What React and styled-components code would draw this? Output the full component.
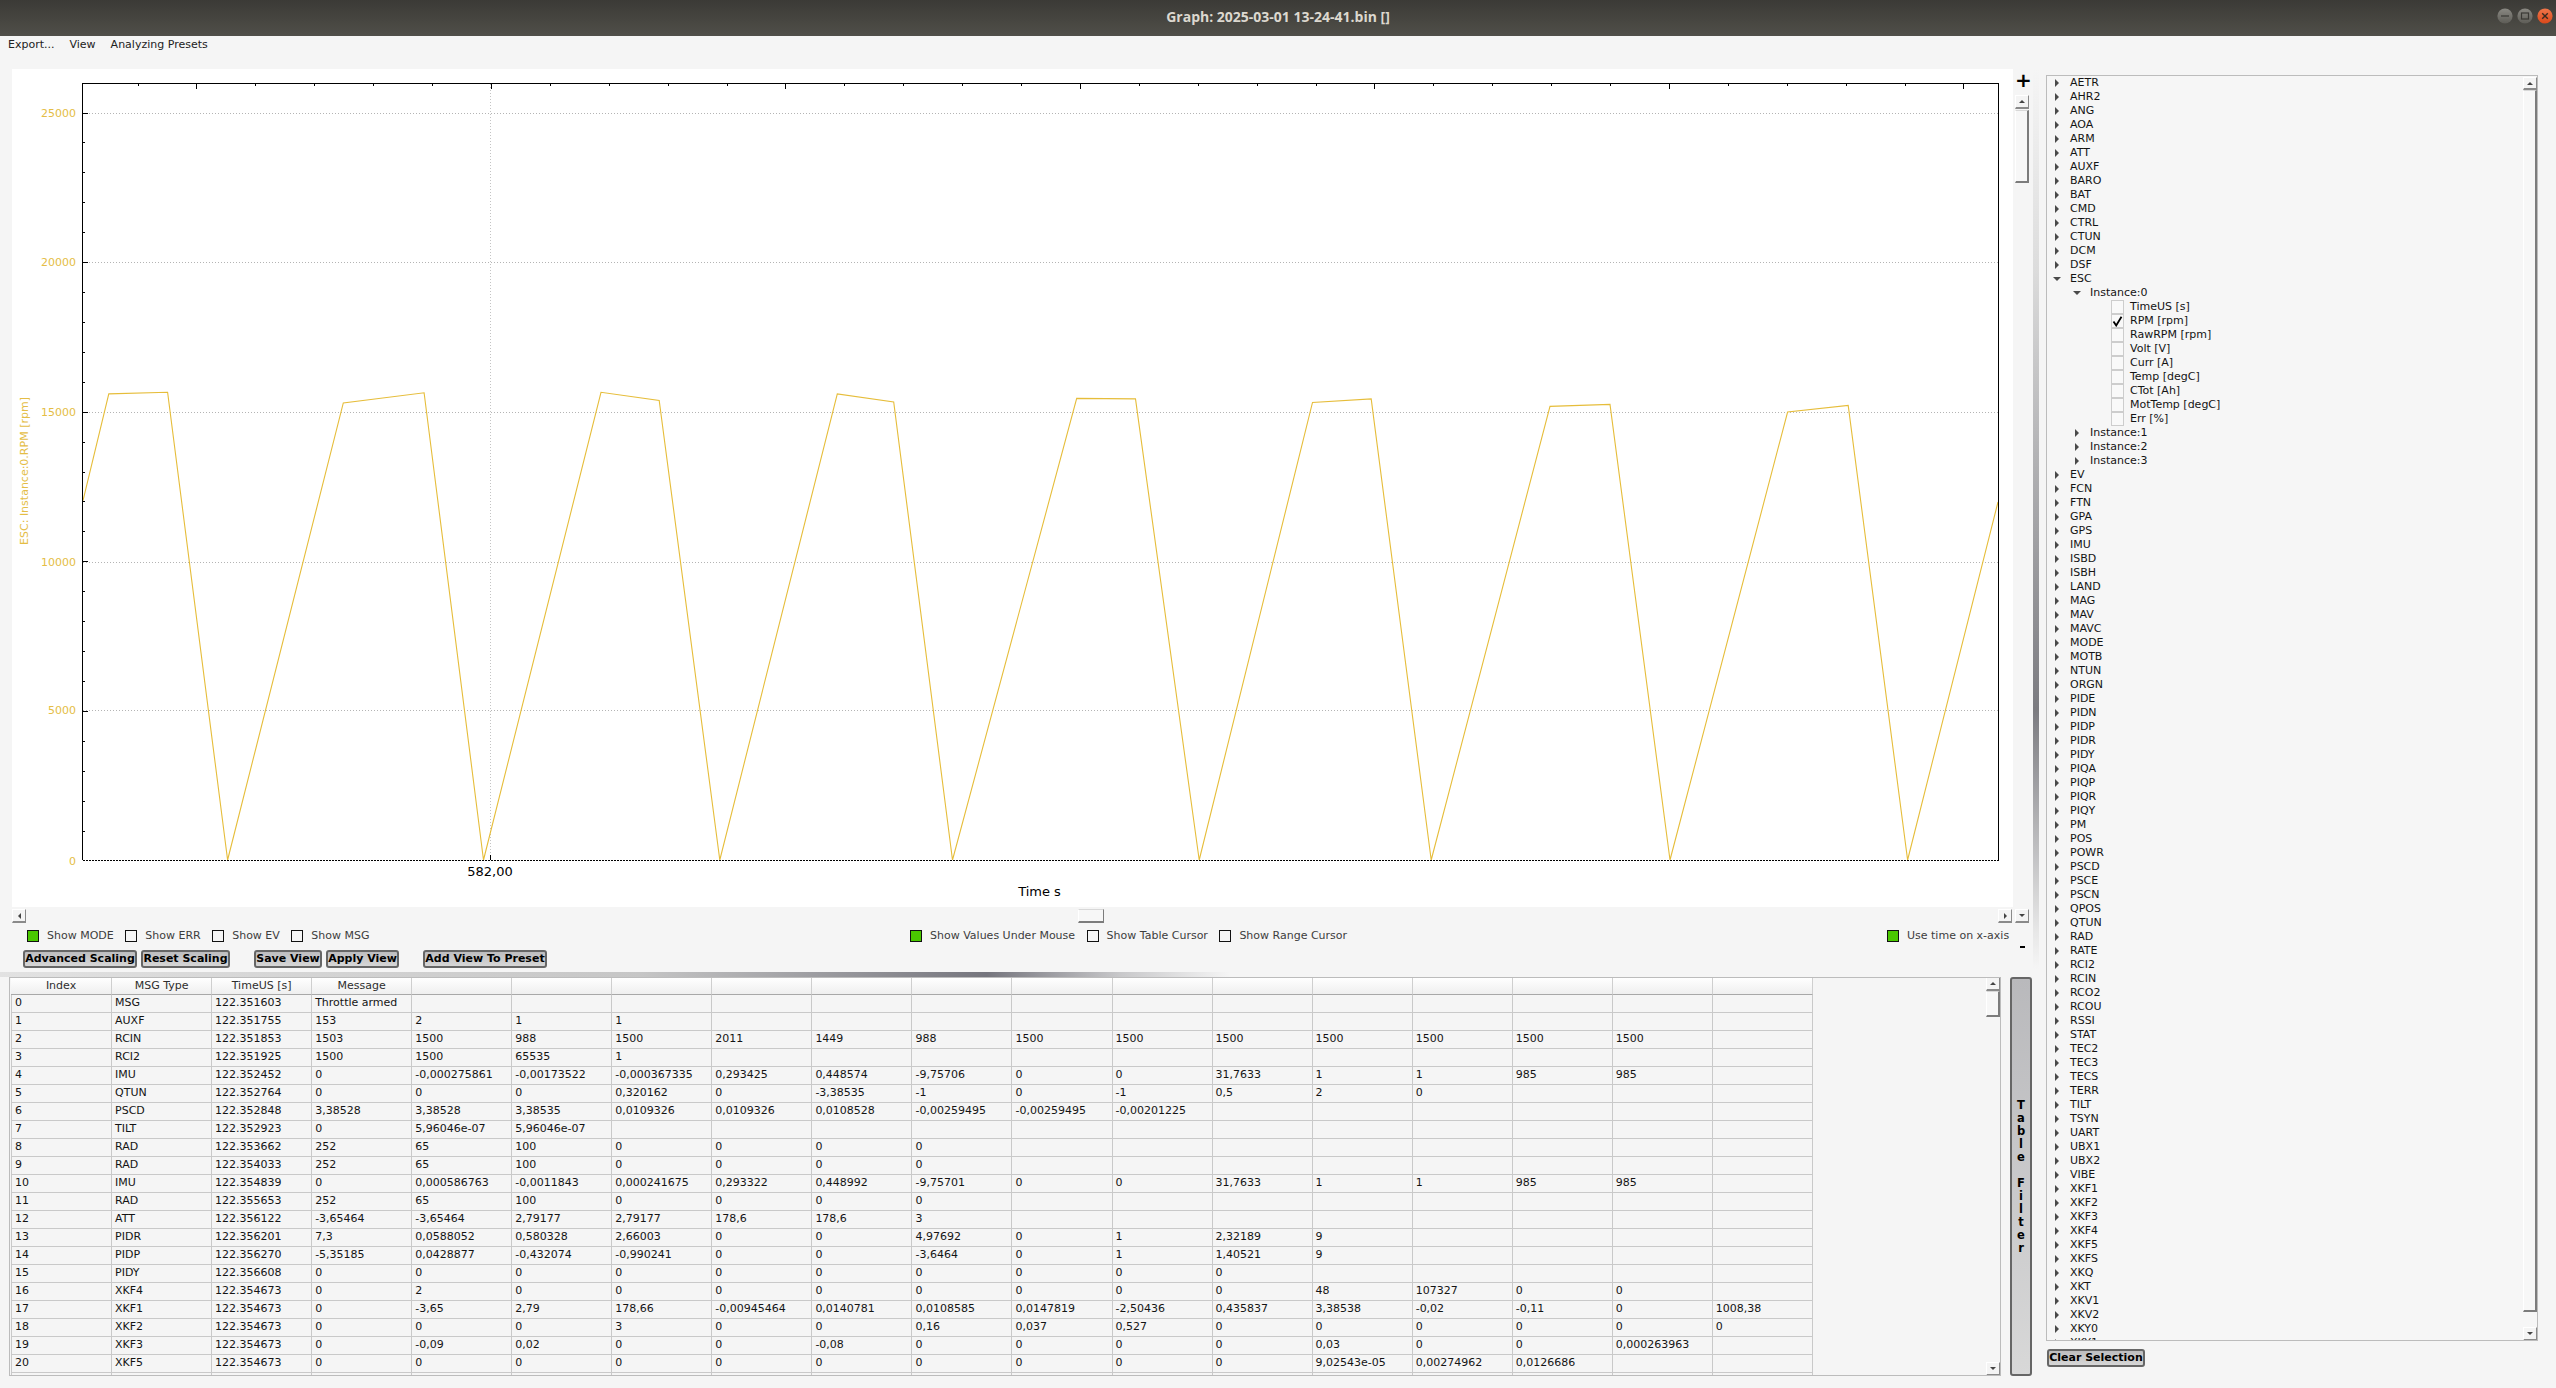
import React from 'react';
import styled, { createGlobalStyle } from 'styled-components';

const Global = createGlobalStyle`
  html, body { margin: 0; padding: 0; background: #f5f5f5; }
  * { box-sizing: border-box; }
`;

const Win = styled.div`
  width: 2556px; height: 1388px; overflow: hidden; background: #f5f5f5;
  font: 11px/14px "DejaVu Sans", sans-serif; color: #222;
  display: flex; flex-direction: column;
`;
const TitleBar = styled.header`
  height: 36px; flex: none; background: linear-gradient(#3b3a36, #504f49);
  display: grid; grid-template-columns: 1fr auto 1fr; align-items: center;
`;
const Title = styled.div`
  grid-column: 2; font: 700 14px/34px "Open Sans", sans-serif; color: #dcd8cf;
  padding-bottom: 2px;
`;
const WinButtons = styled.div`
  grid-column: 3; justify-self: end; display: flex; gap: 4px; padding-right: 3px; padding-bottom: 4px;
`;
const WinBtn = styled.svg`width: 16px; height: 16px; display: block;`;

const MenuBar = styled.nav`
  height: 33px; flex: none; padding-left: 8px; display: flex; gap: 15px;
  line-height: 18px; color: #222; align-items: flex-start;
`;
const Main = styled.main`flex: 1; display: flex; min-height: 0;`;
const LeftColumn = styled.section`width: 2033px; flex: none; display: flex; flex-direction: column;`;
const Upper = styled.div`display: flex; padding-left: 12px; height: 854px; flex: none;`;
const PlotColumn = styled.div`width: 2001px; display: flex; flex-direction: column;`;
const PlotPanel = styled.div`height: 838px; background: #fff;`;
const PlotSvg = styled.svg`display: block;`;
const YLabel = styled.text`font: 11px "DejaVu Sans", sans-serif; fill: #e4bd45;`;
const XLabel = styled.text`font: 13px "DejaVu Sans", sans-serif; fill: #000;`;

const VControls = styled.div`width: 20px; flex: none; display: flex; flex-direction: column; padding-left: 2px;`;
const Plus = styled.div`
  height: 26px; font: 700 20px/22px "DejaVu Sans", sans-serif; color: #000; padding-left: 0;
  width: 14px; text-align: center;
`;

const VBar = styled.div`
  width: 14px; height: ${p => p.$h}px; flex: none; display: flex; flex-direction: column;
`;
const HBar = styled.div`height: 14px; margin-top: 2px; width: 2000px; display: flex; align-items: stretch;`;
const ScrollBtn = styled.div`
  width: 14px; height: ${p => p.$tall || 14}px; flex: none; background: #f4f4f4;
  border-top: 1px solid #fff; border-left: 1px solid #fff;
  border-right: 1px solid #8a8a8a; border-bottom: 2px solid #8a8a8a;
  display: flex; align-items: center; justify-content: center;
`;
const Tri = styled.i`
  display: block; width: 0; height: 0;
  ${p => p.$d === 'up' && 'border: 3px solid transparent; border-top: 0; border-bottom: 3px solid #444;'}
  ${p => p.$d === 'down' && 'border: 3px solid transparent; border-bottom: 0; border-top: 3px solid #444;'}
  ${p => p.$d === 'left' && 'border: 3px solid transparent; border-left: 0; border-right: 3px solid #444;'}
  ${p => p.$d === 'right' && 'border: 3px solid transparent; border-right: 0; border-left: 3px solid #444;'}
`;
const Slider = styled.div`
  flex: none; background: #f7f7f7;
  border-top: 1px solid #d8d8d8; border-left: 1px solid #fff;
  border-right: 2px solid #7c7c7c; border-bottom: 2px solid #7c7c7c;
  height: ${p => p.$h}px; margin-top: ${p => p.$top || 0}px;
`;
const HHandle = styled(Slider)`height: 14px; width: 26px; margin: 0 0 0 1052px; border-right-width: 1px;`;
const Spacer = styled.div`flex: 1;`;

const ChecksRow = styled.div`
  height: 26px; flex: none; padding-left: 27px; display: grid; align-items: center;
  grid-template-columns: 883px 977px 1fr;
  color: #3d3d3d; position: relative;
`;
const CheckGroup = styled.div`display: flex; gap: 11.5px; align-items: center;`;
const Check = styled.label`display: flex; gap: 8px; align-items: center; white-space: nowrap;`;
const CheckBox = styled.span`
  width: 12px; height: 12px; flex: none; border: 1px solid #111;
  background: ${p => (p.$on ? '#4ac900' : '#f5f5f5')};
`;
const MinusMark = styled.span`
  position: absolute; left: 2020px; top: 23px; width: 5px; height: 2px; background: #000;
`;
const ButtonRow = styled.div`height: 18px; margin-top: 1px; flex: none; display: flex; padding-left: 23px;`;
const Btn = styled.button`
  height: 18px; padding: 0; width: ${p => p.$w}px; margin-left: ${p => p.$ml || 0}px; flex: none;
  border: 2px solid #666; border-radius: 3px;
  background: linear-gradient(#bdbdbf, #d6d6d6);
  font: 700 11px/14px "DejaVu Sans", sans-serif; color: #000; white-space: nowrap;
`;
const HSplit = styled.div`
  height: 5px; margin-top: 4px; flex: none;
  background: linear-gradient(to right, #e2e2e2 0, #c6c6c6 640px, #75757d 987px, #c8c8ca 1120px, #f5f5f5 1230px);
`;
const TableRow = styled.div`display: flex; padding-left: 9px; flex: none;`;
const TablePanel = styled.div`
  width: 1992px; height: 399px; border: 1px solid #bcbcbc;
  position: relative; overflow: hidden;
`;
const TableScroll = styled.div`
  position: absolute; right: 0; top: -1px; bottom: -1px; display: flex; flex-direction: column;
`;
const Grid = styled.table`
  table-layout: fixed; border-collapse: separate; border-spacing: 0; width: 1802px;
  margin-left: 1px;
`;
const Th = styled.th`
  width: ${p => p.$w || 100}px; height: 17px; padding: 0; font-weight: 400; text-align: center; color: #2e2e2e;
  background: linear-gradient(#fff, #efefef); border-right: 1px solid #cfcfcf; border-bottom: 1px solid #a8a8a8;
  line-height: 14px;
`;
const Td = styled.td`
  height: 18px; padding: 0 0 1px 3px; overflow: hidden; white-space: nowrap; color: #141414;
  border-right: 1px solid #c9c9c9; border-bottom: 1px solid #c9c9c9; line-height: 14px;
  ${p => p.$first && 'border-left: 1px solid #c9c9c9;'}
`;
const FilterBtn = styled.button`
  width: 22px; height: 399px; margin-left: 9px; padding: 0; flex: none;
  border: 2px solid #666; border-radius: 3px;
  background: linear-gradient(#b9b9bc, #d8d8d8);
  font: 700 11.5px/13px "DejaVu Sans", sans-serif; color: #000;
  display: flex; flex-direction: column; align-items: center; justify-content: center;
`;
const FilterChar = styled.span`display: block; height: 13px; min-width: 1px; white-space: pre;`;

const VSplit = styled.div`
  width: 6px; flex: none;
  background: linear-gradient(#f5f5f5 0, #dcdcdc 200px, #7b7b80 640px, #e6e6e6 860px, #f5f5f5 900px);
`;
const RightColumn = styled.aside`
  width: 492px; margin-left: 7px; padding-top: 6px; flex: none; display: flex; flex-direction: column;
`;
const TreePanel = styled.div`
  height: 1266px; border: 1px solid #bcbcbc; overflow: hidden; position: relative; background: #f6f6f6;
`;
const TreeScroll = styled.div`
  position: absolute; right: 0; top: 1px; bottom: -1px; display: flex; flex-direction: column;
`;
const TreeRowBox = styled.div`
  height: 14px; display: flex; align-items: center; padding-left: ${p => p.$level * 20}px;
  color: #141414; white-space: nowrap; line-height: 14px;
`;
const ArrowSlot = styled.span`
  width: 23px; flex: none; display: flex; align-items: center; padding-left: ${p => (p.$open ? 6 : 8)}px;
`;
const ArrowRight = styled.i`
  display: block; width: 0; height: 0; border-top: 4px solid transparent; border-bottom: 4px solid transparent;
  border-left: 4.5px solid #4a4a4a;
`;
const ArrowDown = styled.i`
  display: block; width: 0; height: 0; border-left: 4px solid transparent; border-right: 4px solid transparent;
  border-top: 4.5px solid #4a4a4a;
`;
const LeafBox = styled.span`
  width: 13px; height: 14px; flex: none; margin: 0 6px 0 64px; background: #f9f9f9;
  border: 1px solid #cdcdcd; display: flex; align-items: center; justify-content: center;
`;
const ClearRow = styled.div`margin-top: 8px; padding-left: 1px;`;

const curve = [[83,500.7],[108.8,393.9],[167.6,392.3],[227.6,860],[343.3,402.9],[424.1,392.8],[483.5,860],[601,392.3],[659.2,400.4],[719.8,860],[837.3,393.9],[893.7,401.9],[952.5,860],[1076.7,398.4],[1135.5,398.9],[1199.2,860],[1312.5,402.4],[1371.2,398.9],[1431.2,860],[1550,406.4],[1610,404.4],[1670,860],[1787.6,412],[1848.2,405.4],[1907.6,860],[1998,502]];
const yMajors = [[112.7,'25000'],[262.4,'20000'],[411.5,'15000'],[561.6,'10000'],[710.2,'5000'],[860.5,'0']];

function Plot() {
  const xTicks = [];
  for (let i = 0; i < 32; i++) xTicks.push({ x: 137.5 + i * 58.9, major: i % 5 === 1 });
  const yTicks = [];
  for (let i = 1; i < 26; i++) { const y = 860.5 - i * 29.92; if (y > 84) yTicks.push({ y, major: i % 5 === 0 }); }
  return (
    <PlotSvg width="2001" height="838" viewBox="12 69 2001 838">
      {yMajors.slice(0, 5).map(([y]) => (
        <line key={y} x1="83" x2="1998" y1={Math.round(y) + 0.5} y2={Math.round(y) + 0.5} stroke="#b4b4b4" strokeDasharray="1 2" />
      ))}
      <line x1="490.5" x2="490.5" y1="84" y2="860" stroke="#c4c4c4" strokeDasharray="1 2" />
      <polyline points={curve.map(p => p.join(',')).join(' ')} fill="none" stroke="#e6bd3a" strokeWidth="1.1" />
      <rect x="82.5" y="83.5" width="1916" height="777" fill="none" stroke="#000" strokeWidth="1" shapeRendering="crispEdges" />
      <line x1="82" x2="1999" y1="860.5" y2="860.5" stroke="#fff" strokeDasharray="1 2" shapeRendering="crispEdges" />
      {xTicks.map(t => (
        <line key={t.x} x1={Math.round(t.x) + 0.5} x2={Math.round(t.x) + 0.5} y1="84" y2={t.major ? 89 : 86} stroke="#000" shapeRendering="crispEdges" />
      ))}
      {yTicks.map(t => (
        <line key={t.y} x1="83" x2={t.major ? 88 : 85} y1={Math.round(t.y) + 0.5} y2={Math.round(t.y) + 0.5} stroke="#000" shapeRendering="crispEdges" />
      ))}
      <line x1="490.5" x2="490.5" y1="855" y2="860" stroke="#000" shapeRendering="crispEdges" />
      {yMajors.map(([y, l]) => (
        <YLabel key={l} x="76" y={y + 4} textAnchor="end">{l}</YLabel>
      ))}
      <YLabel x="28" y="471" textAnchor="middle" transform="rotate(-90 28 471)" fontSize="11">ESC: Instance:0.RPM [rpm]</YLabel>
      <XLabel x="490" y="876" textAnchor="middle">582,00</XLabel>
      <XLabel x="1039.5" y="896" textAnchor="middle">Time s</XLabel>
    </PlotSvg>
  );
}

const names1 = 'AETR AHR2 ANG AOA ARM ATT AUXF BARO BAT CMD CTRL CTUN DCM DSF'.split(' ');
const names2 = 'EV FCN FTN GPA GPS IMU ISBD ISBH LAND MAG MAV MAVC MODE MOTB NTUN ORGN PIDE PIDN PIDP PIDR PIDY PIQA PIQP PIQR PIQY PM POS POWR PSCD PSCE PSCN QPOS QTUN RAD RATE RCI2 RCIN RCO2 RCOU RSSI STAT TEC2 TEC3 TECS TERR TILT TSYN UART UBX1 UBX2 VIBE XKF1 XKF2 XKF3 XKF4 XKF5 XKFS XKQ XKT XKV1 XKV2 XKY0 XKY1'.split(' ');
const leaves = ['TimeUS [s]','RPM [rpm]','RawRPM [rpm]','Volt [V]','Curr [A]','Temp [degC]','CTot [Ah]','MotTemp [degC]','Err [%]'];

const Node = ({ level, open, children }) => (
  <TreeRowBox $level={level}>
    <ArrowSlot $open={open}>{open ? <ArrowDown /> : <ArrowRight />}</ArrowSlot>
    {children}
  </TreeRowBox>
);

function Tree() {
  return (
    <TreePanel>
      {names1.map(n => <Node key={n} level={0}>{n}</Node>)}
      <Node level={0} open>ESC</Node>
      <Node level={1} open>Instance:0</Node>
      {leaves.map(l => (
        <TreeRowBox key={l} $level={0}>
          <LeafBox>
            {l === 'RPM [rpm]' && (
              <svg width="11" height="11" viewBox="0 0 11 11"><path d="M1.5 5.5 L4.2 9.5 L9.5 0.8" fill="none" stroke="#000" strokeWidth="1.8" /></svg>
            )}
          </LeafBox>
          {l}
        </TreeRowBox>
      ))}
      <Node level={1}>Instance:1</Node>
      <Node level={1}>Instance:2</Node>
      <Node level={1}>Instance:3</Node>
      {names2.map(n => <Node key={n} level={0}>{n}</Node>)}
      <TreeScroll>
        <ScrollBtn $tall={13}><Tri $d="up" /></ScrollBtn>
        <Slider $h={1222} $top={0} />
        <Spacer />
        <ScrollBtn><Tri $d="down" /></ScrollBtn>
      </TreeScroll>
    </TreePanel>
  );
}

const e = '';
const rows = [
  ['0','MSG','122.351603','Throttle armed'],
  ['1','AUXF','122.351755','153','2','1','1'],
  ['2','RCIN','122.351853','1503','1500','988','1500','2011','1449','988','1500','1500','1500','1500','1500','1500','1500'],
  ['3','RCI2','122.351925','1500','1500','65535','1'],
  ['4','IMU','122.352452','0','-0,000275861','-0,00173522','-0,000367335','0,293425','0,448574','-9,75706','0','0','31,7633','1','1','985','985'],
  ['5','QTUN','122.352764','0','0','0','0,320162','0','-3,38535','-1','0','-1','0,5','2','0'],
  ['6','PSCD','122.352848','3,38528','3,38528','3,38535','0,0109326','0,0109326','0,0108528','-0,00259495','-0,00259495','-0,00201225'],
  ['7','TILT','122.352923','0','5,96046e-07','5,96046e-07'],
  ['8','RAD','122.353662','252','65','100','0','0','0','0'],
  ['9','RAD','122.354033','252','65','100','0','0','0','0'],
  ['10','IMU','122.354839','0','0,000586763','-0,0011843','0,000241675','0,293322','0,448992','-9,75701','0','0','31,7633','1','1','985','985'],
  ['11','RAD','122.355653','252','65','100','0','0','0','0'],
  ['12','ATT','122.356122','-3,65464','-3,65464','2,79177','2,79177','178,6','178,6','3'],
  ['13','PIDR','122.356201','7,3','0,0588052','0,580328','2,66003','0','0','4,97692','0','1','2,32189','9'],
  ['14','PIDP','122.356270','-5,35185','0,0428877','-0,432074','-0,990241','0','0','-3,6464','0','1','1,40521','9'],
  ['15','PIDY','122.356608','0','0','0','0','0','0','0','0','0','0'],
  ['16','XKF4','122.354673','0','2','0','0','0','0','0','0','0','0','48','107327','0','0'],
  ['17','XKF1','122.354673','0','-3,65','2,79','178,66','-0,00945464','0,0140781','0,0108585','0,0147819','-2,50436','0,435837','3,38538','-0,02','-0,11','0','1008,38'],
  ['18','XKF2','122.354673','0','0','0','3','0','0','0,16','0,037','0,527','0','0','0','0','0','0'],
  ['19','XKF3','122.354673','0','-0,09','0,02','0','0','-0,08','0','0','0','0','0,03','0','0','0,000263963'],
  ['20','XKF5','122.354673','0','0','0','0','0','0','0','0','0','0','9,02543e-05','0,00274962','0,0126686'],
  [],
];
const cols = Array.from({ length: 18 });
const heads = ['Index','MSG Type','TimeUS [s]','Message'];

function DataTable() {
  return (
    <TablePanel>
      <Grid>
        <thead>
          <tr>{cols.map((_, i) => <Th key={i} $w={i === 0 ? 101 : 100}>{heads[i] || e}</Th>)}</tr>
        </thead>
        <tbody>
          {rows.map((r, ri) => (
            <tr key={ri}>{cols.map((_, i) => <Td key={i} $first={i === 0}>{r[i] || e}</Td>)}</tr>
          ))}
        </tbody>
      </Grid>
      <TableScroll>
        <ScrollBtn><Tri $d="up" /></ScrollBtn>
        <Slider $h={26} />
        <Spacer />
        <ScrollBtn><Tri $d="down" /></ScrollBtn>
      </TableScroll>
    </TablePanel>
  );
}

const Chk = ({ on, children }) => (
  <Check><CheckBox $on={on} />{children}</Check>
);

export default function App() {
  return (
    <Win>
      <Global />
      <TitleBar>
        <Title>Graph: 2025-03-01 13-24-41.bin []</Title>
        <WinButtons>
          <WinBtn viewBox="0 0 16 16"><defs><linearGradient id="g" x1="0" y1="0" x2="0" y2="1"><stop offset="0" stopColor="#8a8983" /><stop offset="1" stopColor="#5d5c56" /></linearGradient><linearGradient id="o" x1="0" y1="0" x2="0" y2="1"><stop offset="0" stopColor="#f0764a" /><stop offset="1" stopColor="#d9481a" /></linearGradient></defs><circle cx="8" cy="8" r="7.6" fill="url(#g)" /><path d="M4 8h8" stroke="#3a3935" strokeWidth="1.2" /></WinBtn>
          <WinBtn viewBox="0 0 16 16"><circle cx="8" cy="8" r="7.6" fill="url(#g)" /><rect x="4.5" y="5" width="7" height="6" fill="none" stroke="#3a3935" strokeWidth="1.2" /></WinBtn>
          <WinBtn viewBox="0 0 16 16"><circle cx="8" cy="8" r="7.6" fill="url(#o)" /><path d="M5.2 5.2l5.6 5.6M10.8 5.2l-5.6 5.6" stroke="#3a2a20" strokeWidth="1.4" /></WinBtn>
        </WinButtons>
      </TitleBar>
      <MenuBar><span>Export...</span><span>View</span><span>Analyzing Presets</span></MenuBar>
      <Main>
        <LeftColumn>
          <Upper>
            <PlotColumn>
              <PlotPanel><Plot /></PlotPanel>
              <HBar>
                <ScrollBtn><Tri $d="left" /></ScrollBtn>
                <HHandle />
                <Spacer />
                <ScrollBtn><Tri $d="right" /></ScrollBtn>
              </HBar>
            </PlotColumn>
            <VControls>
              <Plus>+</Plus>
              <VBar $h={828}>
                <ScrollBtn><Tri $d="up" /></ScrollBtn>
                <Slider $h={73} $top={1} />
                <Spacer />
                <ScrollBtn><Tri $d="down" /></ScrollBtn>
              </VBar>
            </VControls>
          </Upper>
          <ChecksRow>
            <CheckGroup>
              <Chk on>Show MODE</Chk><Chk>Show ERR</Chk><Chk>Show EV</Chk><Chk>Show MSG</Chk>
            </CheckGroup>
            <CheckGroup>
              <Chk on>Show Values Under Mouse</Chk><Chk>Show Table Cursor</Chk><Chk>Show Range Cursor</Chk>
            </CheckGroup>
            <CheckGroup>
              <Chk on>Use time on x-axis</Chk>
            </CheckGroup>
            <MinusMark />
          </ChecksRow>
          <ButtonRow>
            <Btn $w={114}>Advanced Scaling</Btn>
            <Btn $w={89} $ml={4}>Reset Scaling</Btn>
            <Btn $w={68} $ml={24}>Save View</Btn>
            <Btn $w={73} $ml={4}>Apply View</Btn>
            <Btn $w={124} $ml={24}>Add View To Preset</Btn>
          </ButtonRow>
          <HSplit />
          <TableRow>
            <DataTable />
            <FilterBtn>
              {'Table Filter'.split('').map((c, i) => <FilterChar key={i}>{c}</FilterChar>)}
            </FilterBtn>
          </TableRow>
        </LeftColumn>
        <VSplit />
        <RightColumn>
          <Tree />
          <ClearRow><Btn $w={98}>Clear Selection</Btn></ClearRow>
        </RightColumn>
      </Main>
    </Win>
  );
}
